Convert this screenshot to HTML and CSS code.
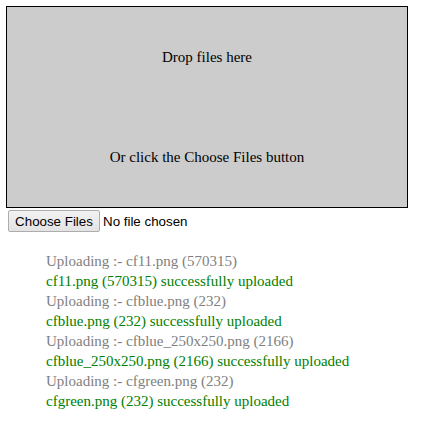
FILE: index.html
```html
<!DOCTYPE html>
<html>
<head>
<meta charset="utf-8">
<link rel="stylesheet" href="styles.css">
</head>
<body>
<div class="page">
  <div class="dropzone">
    <div class="drop-line">Drop files here</div>
    <div class="drop-line">Or click the Choose Files button</div>
  </div>
  <div class="file-row">
    <button class="choose-btn" type="button">Choose Files</button>
    <span class="file-status">No file chosen</span>
  </div>
  <div class="log">
    <div class="log-line pending">Uploading :- cf11.png (570315)</div>
    <div class="log-line done">cf11.png (570315) successfully uploaded</div>
    <div class="log-line pending">Uploading :- cfblue.png (232)</div>
    <div class="log-line done">cfblue.png (232) successfully uploaded</div>
    <div class="log-line pending">Uploading :- cfblue_250x250.png (2166)</div>
    <div class="log-line done">cfblue_250x250.png (2166) successfully uploaded</div>
    <div class="log-line pending">Uploading :- cfgreen.png (232)</div>
    <div class="log-line done">cfgreen.png (232) successfully uploaded</div>
  </div>
</div>
</body>
</html>
```

FILE: styles.css
```css
html, body {
  margin: 0;
  padding: 0;
  background: #ffffff;
}

body {
  font-family: "Liberation Serif", "Times New Roman", serif;
  font-size: 15px;
  color: #000000;
}

.page {
  padding: 6px;
}

.dropzone {
  box-sizing: border-box;
  width: 402px;
  height: 202px;
  border: 1px solid #000000;
  background: #cccccc;
  display: flex;
  flex-direction: column;
  align-items: center;
  padding-top: 40px;
  gap: 80px;
}

.drop-line {
  line-height: 20px;
}

.file-row {
  display: flex;
  align-items: center;
  margin: 2px 2px 0 2px;
  font-family: "Liberation Sans", Arial, sans-serif;
  font-size: 13.33px;
}

.choose-btn {
  box-sizing: border-box;
  height: 22px;
  width: 92px;
  padding: 0;
  margin: 0;
  font-family: "Liberation Sans", Arial, sans-serif;
  font-size: 13.33px;
  color: #000000;
  background: linear-gradient(#f2f2f2, #e3e3e3);
  border: 1px solid #adadad;
  border-radius: 2px;
}

.file-status {
  margin-left: 3px;
}

.log {
  margin-top: 19px;
  padding-left: 40px;
}

.log-line {
  line-height: 20px;
}

.pending {
  color: #808080;
}

.done {
  color: #008000;
}
```
